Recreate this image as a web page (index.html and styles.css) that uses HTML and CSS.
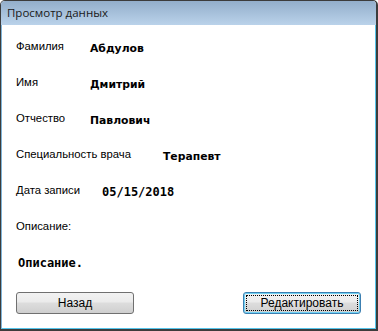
FILE: index.html
```html
<!DOCTYPE html>
<html lang="ru">
<head>
<meta charset="utf-8">
<title>Просмотр данных</title>
<link rel="stylesheet" href="styles.css">
</head>
<body>
<div class="window">
  <div class="titlebar">Просмотр данных</div>
  <div class="frame">
    <div class="content">
      <div class="row"><span class="label">Фамилия</span><span class="value">Абдулов</span></div>
      <div class="row"><span class="label">Имя</span><span class="value">Дмитрий</span></div>
      <div class="row"><span class="label">Отчество</span><span class="value">Павлович</span></div>
      <div class="row wide"><span class="label">Специальность врача</span><span class="value">Терапевт</span></div>
      <div class="row date"><span class="label">Дата записи</span><span class="value mono">05/15/2018</span></div>
      <div class="row"><span class="label">Описание:</span></div>
      <div class="desc mono">Описание.</div>
      <div class="buttons">
        <button class="btn">Назад</button>
        <button class="btn focused"><span class="focus-ring">Редактировать</span></button>
      </div>
    </div>
  </div>
</div>
</body>
</html>
```

FILE: styles.css
```css
html, body {
  margin: 0;
  padding: 0;
  background: #ffffff;
}
.window {
  width: 378px;
  height: 331px;
  box-sizing: border-box;
  border: 1px solid #3c3c3c;
  border-right-width: 2px;
  border-bottom-width: 2px;
  border-radius: 5px 5px 0 0;
  display: flex;
  flex-direction: column;
  overflow: hidden;
  background: #ffffff;
}
.titlebar {
  height: 24px;
  flex: none;
  box-sizing: border-box;
  padding: 4px 0 0 6px;
  background: linear-gradient(#93aecb, #bad2ea);
  font-family: "Open Sans", "Noto Sans", sans-serif;
  font-size: 11.5px;
  line-height: 16px;
  color: #1a1a1a;
}
.frame {
  flex: 1;
  border-left: 1px solid #7fb4d8;
  border-right: 1px solid #55c4ea;
  border-bottom: 1px solid #55c4ea;
  box-sizing: border-box;
  padding-bottom: 2px;
  display: flex;
}
.content {
  flex: 1;
  background: #ffffff;
  padding: 15px 0 0 14px;
  display: flex;
  flex-direction: column;
  font-family: "Liberation Sans", Arial, sans-serif;
  font-size: 11.3px;
  color: #000000;
}
.row {
  height: 36px;
  display: flex;
  align-items: flex-start;
}
.label {
  width: 74px;
  flex: none;
  line-height: 13px;
}
.row.wide .label {
  width: 147px;
}
.row.date .label {
  width: 86px;
}
.value {
  padding-top: 2px;
  line-height: 13px;
  font-family: "DejaVu Sans", sans-serif;
  font-weight: bold;
  font-size: 10.8px;
}
.value.mono,
.desc.mono {
  font-family: "DejaVu Sans Mono", "Liberation Mono", monospace;
  font-weight: bold;
  font-size: 12px;
}
.desc {
  height: 36px;
  margin-top: 0;
  padding-left: 2px;
  line-height: 14px;
}
.buttons {
  display: flex;
  justify-content: space-between;
  padding-right: 14px;
}
.btn {
  width: 118px;
  height: 22px;
  box-sizing: border-box;
  border: 1px solid #707070;
  border-radius: 3px;
  background: linear-gradient(#f2f2f2 0%, #ebebeb 45%, #dddddd 50%, #cfcfcf 100%);
  font-family: "Liberation Sans", Arial, sans-serif;
  font-size: 12px;
  color: #000000;
  padding: 0;
  display: flex;
  align-items: center;
  justify-content: center;
}
.btn.focused {
  border-color: #3c7fb1;
  box-shadow: inset 0 0 0 1px #6fd2f5;
  padding: 2px;
}
.focus-ring {
  flex: 1;
  align-self: stretch;
  border: 1px dotted #000000;
  display: flex;
  align-items: center;
  justify-content: center;
  line-height: 14px;
}
```
